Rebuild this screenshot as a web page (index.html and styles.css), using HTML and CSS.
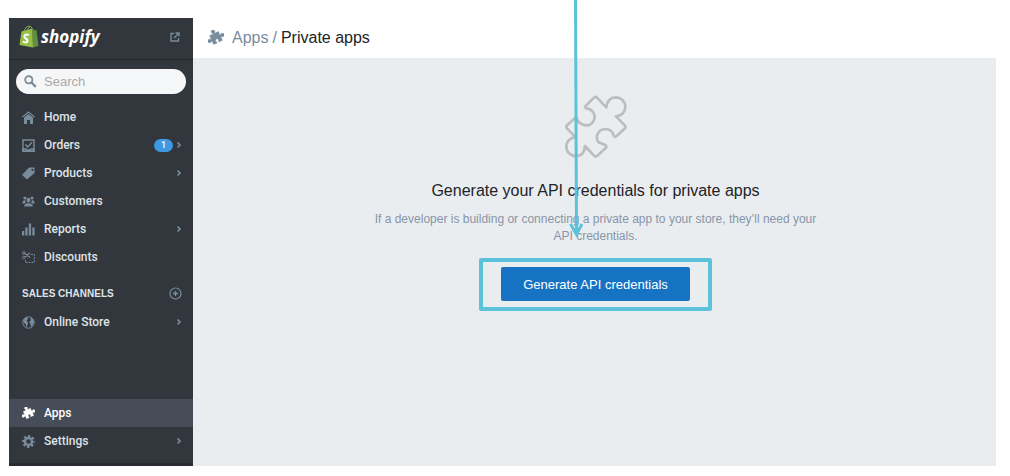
FILE: index.html
```html
<!DOCTYPE html>
<html lang="en">
<head>
<meta charset="utf-8">
<title>Private apps</title>
<link rel="stylesheet" href="styles.css">
</head>
<body>
<svg class="sprite" aria-hidden="true">
  <symbol id="chevron" viewBox="0 0 6 8"><path d="M1.500 1.500 4 4 1.500 6.500" fill="none" stroke="currentColor" stroke-width="1.700"/></symbol>
  <symbol id="puzzle" viewBox="-1 -1 50 50"><path transform="rotate(-25 24 24)" d="M9 9H20Q22 9 20.500 6A5.500 5.500 0 1 1 27.500 6Q26 9 28 9H39V20Q39 22 42 20.500A5.500 5.500 0 1 1 42 27.500Q39 26 39 28V39H28Q26 39 27.500 36A5 5 0 1 0 20.500 36Q22 39 20 39H9V28Q9 26 6 27.500A5.500 5.500 0 1 1 6 20.500Q9 22 9 20Z" fill="currentColor" stroke="currentColor" stroke-width="1.500" stroke-linejoin="round"/></symbol>
</svg>
<div class="app">
  <aside class="sidebar">
    <div class="brand">
      <a class="logo" href="#">
        <svg class="bag" viewBox="0 0 20 23" aria-hidden="true">
          <path d="M5 6Q7 1 10 1Q13 1 13.500 5M8 6Q9 2 11 2" fill="none" stroke="#7fae3a" stroke-width="1"/>
          <path d="M2.500 6.500 13.500 3.500 14 22.500 .5 20Z" fill="#95bf47"/>
          <path d="M13.500 3.500 15 5 17.500 5.300 19.500 21 14 22.500Z" fill="#5e8e3e"/>
          <path d="M10 10Q5.500 8.500 5.300 11.500Q5.500 13 7.500 14Q9.200 15.500 8 17Q6.500 18.200 3.800 16.500" fill="none" stroke="#fff" stroke-width="2"/>
        </svg>
        <span>shopify</span>
      </a>
      <a class="external" href="#" aria-label="View your website">
        <svg width="10" height="10" viewBox="0 0 10 10"><path d="M4 1.500H1V9h7.500V6M5.500 1H9v3.500M9 1 4 6" fill="none" stroke="currentColor" stroke-width="1.400"/></svg>
      </a>
    </div>
    <form class="search">
      <label class="field">
        <svg width="13" height="13" viewBox="0 0 13 13" aria-hidden="true"><circle cx="4.800" cy="4.800" r="3.600" fill="none" stroke="currentColor" stroke-width="1.800"/><path d="m7.500 7.500 4.300 4.300" stroke="currentColor" stroke-width="2.400"/></svg>
        <input type="search" placeholder="Search" aria-label="Search">
      </label>
    </form>
    <nav class="nav">
      <a class="item" href="#"><svg class="icon" viewBox="0 0 13 13"><path d="M.5 6 6.500 1l6 5" fill="none" stroke="currentColor" stroke-width="1.200"/><path d="M2 6.500 6.500 3 11 6.500V13H8V9H5v4H2Z" fill="currentColor"/></svg><span>Home</span></a>
      <a class="item" href="#"><svg class="icon" viewBox="0 0 13 13"><path d="M1 1h11v11H1Z" fill="none" stroke="currentColor" stroke-width="1.400"/><path d="M1 10h3l1 1h3l1-1h3v2.500H1ZM3.500 5.500 5.700 8 10 3.300" fill="none" stroke="currentColor" stroke-width="1.400"/></svg><span>Orders</span><b class="badge">1</b><svg class="chev"><use href="#chevron"/></svg></a>
      <a class="item" href="#"><svg class="icon" viewBox="0 0 13 13"><path fill="currentColor" fill-rule="evenodd" d="M7 .5H12.500V6L5 12.500 0 8ZM10.400 1.700a1.100 1.100 0 1 0 .01 0Z"/></svg><span>Products</span><svg class="chev"><use href="#chevron"/></svg></a>
      <a class="item" href="#"><svg class="icon" viewBox="0 0 13 13"><g fill="currentColor"><circle cx="3" cy="3" r="1.600"/><circle cx="10" cy="3" r="1.600"/><path d="M.3 8.500Q.5 5.500 2.500 5.100L4 7 3 8.500ZM12.700 8.500Q12.500 5.500 10.500 5.100L9 7l1 1.500Z"/><ellipse cx="6.500" cy="5.200" rx="1.900" ry="2.400"/><path d="M2 11.500Q2.200 8.800 5 8.200h3Q10.800 8.800 11 11.500Z"/></g></svg><span>Customers</span></a>
      <a class="item" href="#"><svg class="icon" viewBox="0 0 13 13"><path d="M0 8h2.300v4.500H0ZM3.300 4.500h2.300v8H3.300ZM6.800.5h2.300v12H6.800ZM10.300 4.500h2.300v8h-2.300Z" fill="currentColor"/></svg><span>Reports</span><svg class="chev"><use href="#chevron"/></svg></a>
      <a class="item" href="#"><svg class="icon" viewBox="0 0 13 13"><g fill="none" stroke="currentColor"><circle cx="1.800" cy="2" r="1.300"/><circle cx="1.800" cy="6.500" r="1.300"/><path d="m3 2.500 5 4M3 6l5-4" stroke-width="1.200"/><path d="M9 3.500h3.300V11.500H3.500V9" stroke-dasharray="2 1"/></g></svg><span>Discounts</span></a>
    </nav>
    <div class="section">
      <h2>SALES CHANNELS</h2>
      <button class="add" aria-label="Add sales channel"><svg width="13" height="13" viewBox="0 0 13 13"><g fill="none" stroke="currentColor"><circle cx="6.500" cy="6.500" r="5.500" stroke-width="1.200"/><path d="M6.500 4v5M4 6.500h5" stroke-width="1.400"/></g></svg></button>
    </div>
    <nav class="nav">
      <a class="item" href="#"><svg class="icon" viewBox="0 0 13 13"><circle cx="6.500" cy="6.500" r="5.700" fill="none" stroke="currentColor" stroke-width="1"/><path d="M1.200 4Q3 1 5.500 1.200L6 3 4.500 4.500 6 6.500 5.500 9 4.500 11.500 3.700 8.500 1.500 6ZM8 1.500Q11.500 2.500 12 6L10.500 9.500 9 11 8.500 8 7.200 6 8.800 4.300Z" fill="currentColor"/></svg><span>Online Store</span><svg class="chev"><use href="#chevron"/></svg></a>
    </nav>
    <nav class="nav bottom">
      <a class="item active" href="#"><svg class="icon"><use href="#puzzle"/></svg><span>Apps</span></a>
      <a class="item" href="#"><svg class="icon" viewBox="0 0 13 13"><circle cx="6.500" cy="6.500" r="3.500" fill="none" stroke="currentColor" stroke-width="2.400"/><circle cx="6.500" cy="6.500" r="5.400" fill="none" stroke="currentColor" stroke-width="2" stroke-dasharray="2.400 1.841" stroke-dashoffset="1.200"/></svg><span>Settings</span><svg class="chev"><use href="#chevron"/></svg></a>
    </nav>
  </aside>
  <main class="main">
    <header class="crumbs">
      <svg class="crumb-icon"><use href="#puzzle"/></svg>
      <a href="#">Apps</a><i>/</i><h1>Private apps</h1>
    </header>
    <section class="content">
      <div class="empty">
        <svg class="hero" viewBox="57 31 192 189" aria-hidden="true"><path d="M156 39 184 68Q188 38 212 38A28 28 0 0 1 213 95L240 123Q244 127 240 131L214 155Q209 159 206 152Q200 133 180 133A25 25 0 0 0 160 172L182 182Q186 186 182 190L157 213Q152 217 147 213L120 184Q118 214 92 214A28 28 0 0 1 92 158L66 131Q62 127 66 122L93 98Q102 122 124 122A25 25 0 0 0 145 84Q140 74 126 72Q117 69 122 64L147 39Q152 35 156 39Z" fill="none" stroke="#bbbdbe" stroke-width="8" stroke-linejoin="round"/></svg>
        <h2>Generate your API credentials for private apps</h2>
        <p>If a developer is building or connecting a private app to your store, they’ll need your API credentials.</p>
        <div class="highlight"><button class="primary">Generate API credentials</button></div>
        <svg class="arrow" width="14" height="238" viewBox="0 0 14 238" aria-hidden="true"><path d="M6.500 0 7.500 234M1.500 224 7.500 234.500 13 224" fill="none" stroke="#5bc2d9" stroke-width="3"/></svg>
      </div>
    </section>
  </main>
</div>
</body>
</html>
```
FILE: styles.css
```css
* { box-sizing: border-box; }
body { margin: 0; background: #fff; font-family: "Liberation Sans", Arial, sans-serif; color: #212326; }
a { color: inherit; text-decoration: none; }
h1, h2, p { margin: 0; font-weight: 400; }
button { border: 0; font-family: inherit; cursor: pointer; }
svg { flex: none; }
.sprite { position: absolute; width: 0; height: 0; }

.app { display: flex; min-height: 100vh; padding: 18px 14px 10px 9px; }

.sidebar { display: flex; flex-direction: column; width: 184px; flex: none; background: #31373d; color: #dfe3e8; font-family: Roboto, sans-serif; border-bottom: 3px solid #292c33; }
.brand { display: flex; align-items: center; justify-content: space-between; height: 42px; padding: 0 13px 4px 10px; border-bottom: 1px solid #23272c; }
.logo { display: flex; align-items: center; gap: 2px; color: #fff; font: italic 700 17px/24px "Open Sans", sans-serif; }
.bag { width: 20px; height: 23px; }
.external, .add { display: flex; color: #798c9c; }
.search { padding: 9px 7px; }
.field { display: flex; align-items: center; gap: 7px; height: 25px; padding: 0 8px; border-radius: 13px; background: #f5f6f7; color: #798c9c; }
.field input { flex: 1; min-width: 0; padding: 0; border: 0; outline: 0; background: none; font: 13px "Liberation Sans", sans-serif; }
.field input::placeholder { color: #a9a9a9; }

.item { display: flex; align-items: center; height: 28px; padding: 0 11px 0 13px; font-size: 12px; font-weight: 500; }
.item span { flex: 1; margin-left: 9px; }
.icon { width: 13px; height: 13px; color: #798c9c; }
.chev { width: 6px; height: 8px; color: #798c9c; }
.badge { width: 19px; margin-right: 3px; border-radius: 7px; background: #3d9ae2; color: #fff; font-size: 9px; line-height: 13px; text-align: center; font-weight: 500; }
.section { display: flex; align-items: center; justify-content: space-between; padding: 16px 11px 8px 13px; }
.section h2 { font: 700 10px/13px "Liberation Sans", sans-serif; }
.add { padding: 0; background: none; }
.bottom { margin-top: auto; padding-bottom: 8px; }
.active { background: #464d58; color: #fff; }
.active .icon { color: #fff; }

.main { display: flex; flex-direction: column; flex: 1; min-width: 0; }
.crumbs { display: flex; align-items: center; gap: 4px; height: 40px; padding: 0 15px 1px; font-size: 16px; color: #798c9c; }
.crumbs h1 { font-size: 16px; color: #212326; }
.crumbs i { font-style: normal; }
.crumb-icon { width: 16px; height: 16px; margin-right: 4px; }
.content { flex: 1; padding: 37px 16px 24px 18px; background: #e9edf0; }
.empty { position: relative; display: flex; flex-direction: column; align-items: center; max-width: 460px; margin: 0 auto; text-align: center; }
.hero { width: 64px; height: 63px; }
.empty h2 { margin-top: 23px; font-size: 16px; line-height: 20px; }
.empty p { margin-top: 10px; font-size: 12px; line-height: 17px; color: #8795a8; }
.highlight { margin-top: 13px; padding: 5px 18px 6px; border: 4px solid #5bc2d9; border-radius: 2px; }
.primary { height: 34px; padding: 0 22px; border-radius: 2px; background: #1673c4; color: #fff; font-size: 13px; }
.arrow { position: absolute; top: -95px; left: calc(50% - 27px); }
```
